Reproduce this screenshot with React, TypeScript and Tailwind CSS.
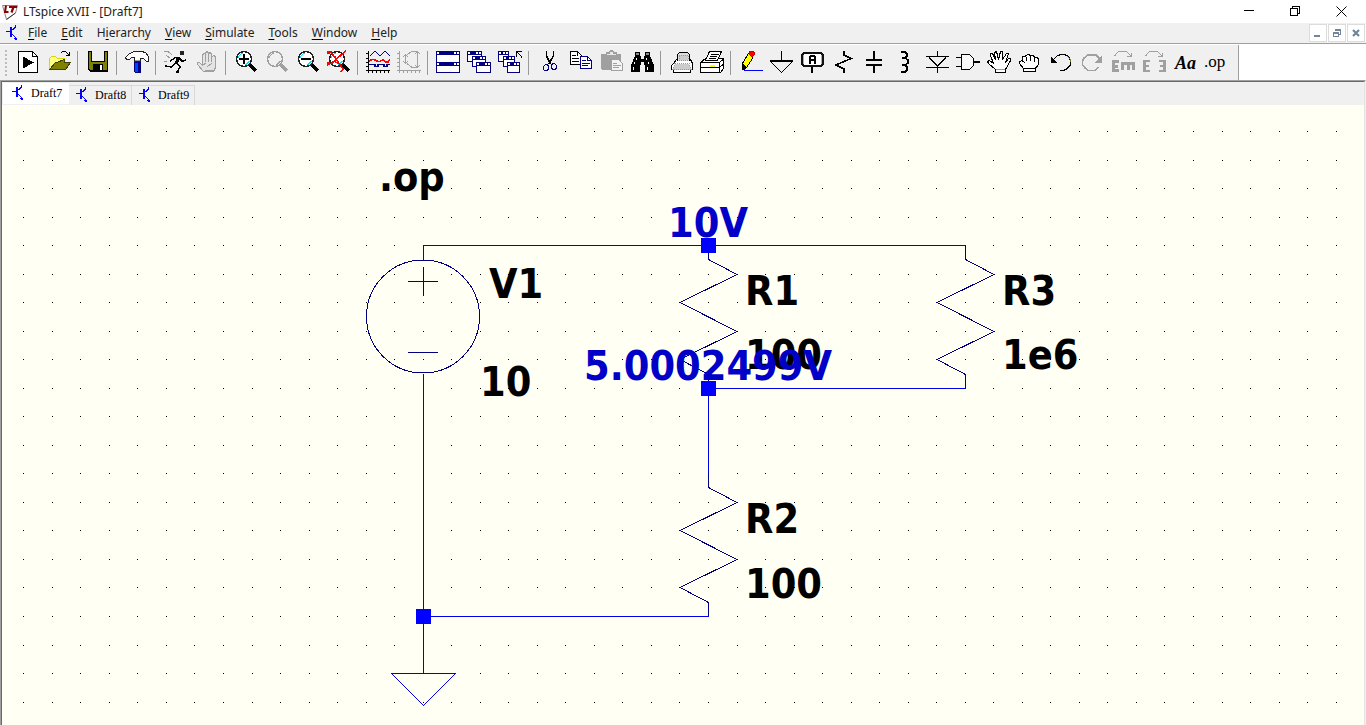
import type { ReactNode } from "react";

/* ---------- Toolbar icons, each drawn on a 25 x 25 pixel grid ---------- */

const NAVY = "#000080";
const GRAY = "#a0a0a0";

function Icon({ children }: { children: ReactNode }) {
  return (
    <svg
      width="25"
      height="25"
      viewBox="0 0 25 25"
      fill="none"
      stroke="#000"
      shapeRendering="crispEdges"
      aria-hidden="true"
      className="block"
    >
      {children}
    </svg>
  );
}

function Lens({ color = "#000", children }: { color?: string; children?: ReactNode }) {
  const gray = color !== "#000";
  return (
    <Icon>
      <path d="M16 15L22 21" stroke={color} strokeWidth="3.4" />
      <circle cx="10" cy="9" r="7.5" fill={gray ? "#f0f0f0" : "#fff"} stroke={gray ? color : "#222"} strokeWidth="1.5" />
      <path d="M4.5 8V6.5L7.5 3.5H9" stroke={gray ? color : "#00e5ff"} strokeWidth={gray ? 1 : 1.4} />
      <path d="M15.5 10.5V11L12 14.5H11" stroke={gray ? color : "#00e5ff"} strokeWidth={gray ? 1 : 1.4} />
      {children}
    </Icon>
  );
}

function MiniWindow({ x, y, w, h }: { x: number; y: number; w: number; h: number }) {
  return (
    <g stroke="none">
      <rect x={x} y={y} width={w} height={h} fill={NAVY} />
      <rect x={x + 1} y={y + 4} width={w - 2} height={h - 5} fill="#fff" />
      <rect x={x + 1} y={y + 1} width="2" height="2" fill="#fff" />
      <rect x={x + w - 6} y={y + 1} width="2" height="2" fill="#fff" />
      <rect x={x + w - 3} y={y + 1} width="2" height="2" fill="#fff" />
    </g>
  );
}

const icons: Record<string, ReactNode> = {
  play: (
    <Icon>
      <path d="M2.5 1.5H16.5L21.5 6.5V22.5H2.5Z" fill="#fff" />
      <path d="M16.5 1.5V6.5H21.5" />
      <path d="M7 6.5L18 12.5L7 18.5Z" fill="#000" stroke="none" />
    </Icon>
  ),
  open: (
    <Icon>
      <path d="M2.5 19.5V8.5L4.5 6.5H8.5L10.5 8.5H17.5V12.5" fill="#ffff80" stroke="#d8d800" />
      <path d="M2.5 19.5L8.5 12.5H23.5L18.5 19.5Z" fill="#808000" stroke="#404000" />
      <path d="M8 13L17.5 9.5V12.5" fill="#808000" stroke="#404000" />
      <path d="M13.5 3.5L15.5 1.5H18.5L22.5 5.5M22.5 2V5.5H18.5" />
    </Icon>
  ),
  save: (
    <Icon>
      <path d="M2 1H22V22H4L2 20Z" fill="#000" stroke="none" />
      <path d="M3 2H5V12H19V2H21V20H4L3 19Z" fill="#808000" stroke="none" />
      <path d="M6 1H18V11H6Z" fill="#f0f0f0" stroke="none" />
      <path d="M7 14H17V21H7Z" fill="#000" stroke="none" />
      <path d="M14 15H16V20H14Z" fill="#fff" stroke="none" />
    </Icon>
  ),
  hammer: (
    <Icon>
      <path d="M9 9H16V22L15 23H10L9 22Z" fill={NAVY} stroke="none" />
      <path d="M10 13H13V22H10Z" fill="#0040ff" stroke="none" />
      <path d="M1.5 9.5L.5 7.5L3.5 4.5L8.5 1.5H16.5L20.5 2.5L23.5 6.5V11.5H21.5L18.5 8.5H15.5V11.5H9.5V7.5H6.5L4.5 9.5Z" fill="#fff" stroke="#222" />
      <path d="M10 10.5H15" stroke="#999" />
    </Icon>
  ),
  run: (
    <Icon>
      <path d="M16 1H20V5H16Z" fill="#222" stroke="none" />
      <path d="M10 7H16V9L14 13H11L12 9Z" fill="#000" stroke="none" />
      <path d="M11 7.5L6 11.5M15 8L18.5 11.5L22 10M12 13L7 17L1 16M12 12L16 17L13 22H15" strokeWidth="1.5" />
      <path d="M0 1.5H4L8 5M2 5.5L6 8M0 11.5H3" stroke="#999" />
    </Icon>
  ),
  hand: (
    <Icon>
      <path d="M8.5 21.5L2.5 14.5V12.5H4.5L7.5 15.5V4.5L9.5 3.5L10.5 4.5V2.5L12.5 1.5L13.5 3.5L15.5 2.5L16.5 4.5V6.5L19.5 5.5L20.5 7.5V17.5L18.5 21.5Z" fill="#e4e4e4" stroke={GRAY} />
      <path d="M10.5 4V12M13.5 3V12M16.5 5V12M8 15L11 13M12 17L17 13M10 20.5H18" stroke={GRAY} />
    </Icon>
  ),
  zoomIn: (
    <Lens>
      <path d="M10 4V14M5 9H15" strokeWidth="2" />
    </Lens>
  ),
  pan: <Lens color={GRAY} />,
  zoomOut: (
    <Lens>
      <path d="M5 9H15" strokeWidth="2" />
    </Lens>
  ),
  zoomFit: (
    <Lens>
      <path d="M0 2H4L16 19L14 22M19 1L14 5L5 13L0 15" stroke="#f00" strokeWidth="1.6" />
      <path d="M8 6V12L13 14" stroke="#f00" />
      <path d="M0 1H3V4H0ZM0 12H3V15H0Z" fill="#f00" stroke="none" />
    </Lens>
  ),
  plot: (
    <Icon>
      <path d="M2.5 1V23M0 20.5H24M0 3.5H2M0 8.5H2M0 12.5H2M0 16.5H2M6.5 20V23M10.5 20V23M14.5 20V23M18.5 20V23M22.5 20V23" />
      <path d="M4 6L9 1L14 6L19 1L24 6" stroke={NAVY} />
      <path d="M3 11L6 9.5H8L12 11.5H14L17 9.5L20 12H22L24 9.5" stroke="#f00" strokeWidth="1.6" />
      <path d="M3 14.5H9V16.5H12V14.5H18V16.5H21V14.5H24" stroke={NAVY} strokeWidth="1.3" />
    </Icon>
  ),
  polar: (
    <Icon>
      <path d="M2.5 1V23M0 20.5H24M0 3.5H2M0 8.5H2M0 12.5H2M0 16.5H2M6.5 20V23M10.5 20V23M14.5 20V23M18.5 20V23M22.5 20V23" stroke={GRAY} />
      <path d="M8.5 5V14M6 7L8.5 4.5L11 7M6 11L8.5 13.5L11 11M10 4.5L15 1.5H20M10 13.5L15 17.5H20M20.5 1V18M18 4L20.5 1.5L23 4M18 15L20.5 17.5L23 15" stroke={GRAY} />
    </Icon>
  ),
  tile: (
    <Icon>
      <MiniWindow x={0} y={1} w={24} h={12} />
      <MiniWindow x={0} y={12} w={24} h={11} />
    </Icon>
  ),
  cascade: (
    <Icon>
      <MiniWindow x={0} y={1} w={15} h={11} />
      <MiniWindow x={5} y={6} w={14} h={11} />
      <MiniWindow x={9} y={12} w={15} h={11} />
    </Icon>
  ),
  closeAll: (
    <Icon>
      <MiniWindow x={0} y={1} w={11} h={11} />
      <MiniWindow x={5} y={6} w={12} h={11} />
      <MiniWindow x={9} y={12} w={13} h={11} />
      <path d="M18.5 7V1.5H24M19 2L23.5 6.5V8" />
    </Icon>
  ),
  cut: (
    <Icon>
      <path d="M9.5 1V6L13.5 14M16.5 1V6L11.5 14" strokeWidth="1.5" />
      <path d="M8.5 14.5H10.5L11.5 16.5V19.5L9.5 20.5H7.5L6.5 19.5V16.5ZM15.5 13.5H17.5L19.5 15.5V18.5L17.5 19.5H15.5L14.5 17.5V15.5Z" stroke={NAVY} strokeWidth="1.4" />
    </Icon>
  ),
  copy: (
    <Icon>
      <path d="M2.5 1.5H9.5L13.5 5.5V14.5H2.5Z" fill="#fff" />
      <path d="M9.5 1.5V5.5M4 5.5H8M4 8.5H11M4 11.5H11" />
      <path d="M12.5 6.5H19.5L23.5 10.5V18.5H12.5Z" fill="#fff" stroke={NAVY} />
      <path d="M19.5 6.5V10.5H23.5M14 10.5H18M14 13.5H22M14 15.5H20" stroke={NAVY} />
    </Icon>
  ),
  paste: (
    <Icon>
      <path d="M2 4H7V2H10L11 0H14L15 2H18V4H22V20H3L2 19Z" fill={GRAY} stroke="none" />
      <path d="M8 5H17V4H14V2H11V4H8Z" fill="#e8e8e8" stroke="none" />
      <path d="M12.5 9.5H19.5L23.5 13.5V20.5H12.5Z" fill="#f4f4f4" stroke={GRAY} />
      <path d="M14 13.5H18M14 15.5H22M14 17.5H20" stroke={GRAY} />
    </Icon>
  ),
  find: (
    <Icon>
      <path d="M5 2H10V6H11V9H14V6H15V2H20V6L24 15V22H15V15H14V12H11V15H10V22H1V15L5 6Z" fill="#000" stroke="none" />
      <path d="M6 3H9V5H6ZM16 3H19V5H16Z" fill="#888" stroke="none" />
      <path d="M6.5 8V10M4.5 12V14M3.5 17V20M16.5 8V10M18.5 12V14M17.5 17V20" stroke="#fff" />
    </Icon>
  ),
  print: (
    <Icon>
      <path d="M4.5 13.5L7.5 9.5H21.5L23.5 13.5V19.5H21.5V22.5H4.5V19.5H2.5V15.5Z" fill="#fff" />
      <path d="M8.5 10.5V4.5L10.5 2.5H18.5L20.5 4.5V10.5" fill="#ddd" />
      <path d="M6 13.5H20L22 19.5H4ZM10 5H19V10H10Z" fill="#ccc" stroke="#999" strokeDasharray="1 1" />
    </Icon>
  ),
  setup: (
    <Icon>
      <path d="M.5 12.5L5.5 8.5H23.5V18.5L20.5 22.5H.5Z" fill="#fff" />
      <path d="M.5 12.5H19.5V22M19.5 12.5L23.5 9M.5 17.5H19.5L23.5 14" />
      <path d="M5.5 10.5L9.5 1.5H21.5L17.5 10.5Z" fill="#fff" />
      <path d="M11 4.5H19M10 6.5H17M9 8.5H16" />
      <path d="M10 15.5H15" stroke="#ff0" strokeWidth="2" />
    </Icon>
  ),
  pencil: (
    <Icon>
      <path d="M3.5 13.5L9.5 3.5H13.5V8.5L7.5 17.5L3.5 19.5Z" fill="#ff0" />
      <path d="M10 4V2L12 1H14L15 2V5L13 7Z" fill="#f00" stroke="#c00" />
      <path d="M3 13L8 17L5 20H3Z" fill="#000" stroke="none" />
      <path d="M5 20.5H24" stroke="#00f" />
    </Icon>
  ),
  ground: (
    <Icon>
      <path d="M11.5 1V11M1 12L11.5 22.5L22 12" strokeWidth="1.4" />
      <path d="M0 11H23" strokeWidth="2" />
    </Icon>
  ),
  label: (
    <Icon>
      <path d="M3 3H20L22 5V14L20 16H3L1 14V5Z" fill="#fff" stroke="#111" strokeWidth="2" />
      <path d="M2.5 5V14M20.5 5V14" stroke="#b8b860" />
      <path d="M9 14V7L10 6H13L14 7V14M9 10H14" strokeWidth="2" />
      <path d="M11 17V23" strokeWidth="2" />
    </Icon>
  ),
  resistor: (
    <Icon>
      <path d="M12 1V5L19 8.5L4 15L12 19V23" strokeWidth="1.6" />
    </Icon>
  ),
  capacitor: (
    <Icon>
      <path d="M3 10H19M3 15H19M11 1V10M11 15V23" strokeWidth="2" />
    </Icon>
  ),
  inductor: (
    <Icon>
      <path d="M7 2H11L13 4V6L11 8H8M11 8L14 10V13L11 15H8M11 15L13 17V20L11 22H7" strokeWidth="1.6" />
    </Icon>
  ),
  diode: (
    <Icon>
      <path d="M12.5 1V6M12.5 17V23M1 6.5H24M1 17.5H24M4 7L12.5 16.5L21 7" strokeWidth="1.3" />
    </Icon>
  ),
  gate: (
    <Icon>
      <path d="M5.5 4.5H13.5L17.5 8.5V15.5L13.5 19.5H5.5Z" fill="#f8f8f8" strokeWidth="1.3" />
      <path d="M0 7.5H5M0 16.5H5M18 12H24" strokeWidth="1.4" />
    </Icon>
  ),
  move: (
    <Icon>
      <path d="M8.5 22.5V19.5L1.5 13.5L.5 11.5L2.5 10.5L6.5 13.5L3.5 5.5V3.5H5.5L8.5 9.5L7.5 2.5L9.5 1.5L11.5 9.5L13.5 1.5H15.5V9.5L19.5 3.5H21.5L18.5 12.5L21.5 8.5H23.5V10.5L18.5 19.5V22.5Z" fill="#fff" />
      <path d="M9 19.5H18" stroke="#999" />
    </Icon>
  ),
  drag: (
    <Icon>
      <path d="M5.5 21.5V18.5L1.5 13.5V11.5L4.5 10.5V6.5H7.5V5.5L10.5 4.5L12.5 5.5H15.5L16.5 7.5H19.5L20.5 9.5V14.5L17.5 18.5V21.5Z" fill="#fff" strokeWidth="1.2" />
      <path d="M8.5 7V11M12.5 6V11M16.5 8V12M4.5 11L7 13M6 18.5H17" />
    </Icon>
  ),
  undo: (
    <Icon>
      <path d="M4 10L8 6L12 4.5H16L20 7L21.5 11V15L18 19L14 20.5H11" strokeWidth="1.3" />
      <path d="M18 6L21 9V12" stroke="#808000" />
      <path d="M2 6V13H9L6 11L4 9Z" fill="#000" stroke="none" />
    </Icon>
  ),
  redo: (
    <Icon>
      <path d="M20 9L16 5H8L4 8L2.5 11V15L5 18L8 20.5H15L18 17" stroke={GRAY} strokeWidth="1.6" />
      <path d="M22 5V13H14L17 10L19 8Z" fill={GRAY} stroke="none" />
    </Icon>
  ),
  rotate: (
    <Icon>
      <path d="M3.5 6L7.5 1.5H15.5L20.5 6.5M20.5 3V6.5H16" stroke={GRAY} />
      <path d="M2.5 10V22M1 11.5H8M1 16H7M1 20.5H8M10 13.5H24M11.5 13V20M17 13V20M22.5 13V20" stroke={GRAY} strokeWidth="3" />
    </Icon>
  ),
  mirror: (
    <Icon>
      <path d="M3.5 6L7.5 1.5H15.5L20.5 6.5M20.5 3V6.5H16" stroke={GRAY} />
      <path d="M2.5 10V22M1 11H8M1 16H7M1 21H8M22.5 10V22M17 11H24M18 16H24M17 21H24" stroke={GRAY} strokeWidth="2.6" />
    </Icon>
  ),
};

type Tool = { id: string; name: string; off?: boolean };

const toolGroups: Tool[][] = [
  [{ id: "play", name: "New schematic" }, { id: "open", name: "Open" }],
  [{ id: "save", name: "Save" }],
  [{ id: "hammer", name: "Control panel" }],
  [{ id: "run", name: "Run" }, { id: "hand", name: "Halt", off: true }],
  [
    { id: "zoomIn", name: "Zoom in" },
    { id: "pan", name: "Pan", off: true },
    { id: "zoomOut", name: "Zoom out" },
    { id: "zoomFit", name: "Zoom to fit" },
  ],
  [{ id: "plot", name: "Pick visible traces" }, { id: "polar", name: "Autorange", off: true }],
  [
    { id: "tile", name: "Tile windows" },
    { id: "cascade", name: "Cascade windows" },
    { id: "closeAll", name: "Close windows" },
  ],
  [
    { id: "cut", name: "Cut" },
    { id: "copy", name: "Copy" },
    { id: "paste", name: "Paste", off: true },
    { id: "find", name: "Find" },
  ],
  [{ id: "print", name: "Print" }, { id: "setup", name: "Print setup" }],
  [
    { id: "pencil", name: "Wire" },
    { id: "ground", name: "Ground" },
    { id: "label", name: "Label net" },
    { id: "resistor", name: "Resistor" },
    { id: "capacitor", name: "Capacitor" },
    { id: "inductor", name: "Inductor" },
    { id: "diode", name: "Diode" },
    { id: "gate", name: "Component" },
    { id: "move", name: "Move" },
    { id: "drag", name: "Drag" },
    { id: "undo", name: "Undo" },
    { id: "redo", name: "Redo", off: true },
    { id: "rotate", name: "Rotate", off: true },
    { id: "mirror", name: "Mirror", off: true },
  ],
];

/* ---------- Small marks ---------- */

function Logo() {
  return (
    <svg width="18" height="18" viewBox="0 0 18 18" aria-hidden="true" className="block">
      <path d="M1.5 2.5H16.5L14.5 10L5.5 16.5Z" fill="#fff" stroke="#888" />
      <path d="M5.5 16.5L14.5 10" stroke="#333" />
      <path d="M5 2.5L4 9H7.5" fill="none" stroke="#8b0000" strokeWidth="2" />
      <path d="M8 4H16M12.5 4L10.5 9.5" fill="none" stroke="#8b0000" strokeWidth="2.2" />
    </svg>
  );
}

function Transistor() {
  return (
    <svg width="12" height="18" viewBox="0 0 12 18" fill="none" stroke="#00f" shapeRendering="crispEdges" aria-hidden="true" className="block">
      <path d="M0 7.5H5" />
      <path d="M5 3V13" strokeWidth="2" />
      <path d="M6 6L9.5 3.5V1M6 10L10 14V16" strokeWidth="1.2" />
      <path d="M10 12V15H7Z" fill="#00f" stroke="none" />
    </svg>
  );
}

/* ---------- Chrome ---------- */

const menus = [
  ["", "F", "ile"],
  ["", "E", "dit"],
  ["H", "i", "erarchy"],
  ["", "V", "iew"],
  ["", "S", "imulate"],
  ["", "T", "ools"],
  ["", "W", "indow"],
  ["", "H", "elp"],
];

function TitleBar() {
  return (
    <header className="flex h-[23px] items-center bg-white pr-0.5">
      <div className="pl-px">
        <Logo />
      </div>
      <h1 className="ml-1 flex-1 text-[12px] leading-4 text-[#222]">LTspice XVII - [Draft7]</h1>
      <button aria-label="Minimize" className="flex h-5 w-[46px] items-center justify-center">
        <svg width="11" height="11" viewBox="0 0 11 11" stroke="#000" shapeRendering="crispEdges">
          <path d="M0 4.5H10" />
        </svg>
      </button>
      <button aria-label="Restore" className="flex h-5 w-[46px] items-center justify-center">
        <svg width="11" height="11" viewBox="0 0 11 11" fill="none" stroke="#000" shapeRendering="crispEdges">
          <path d="M.5 2.5H7.5V9.5H.5ZM2.5 2V.5H9.5V7.5H8" />
        </svg>
      </button>
      <button aria-label="Close" className="flex h-5 w-[46px] items-center justify-center">
        <svg width="11" height="11" viewBox="0 0 11 11" stroke="#000">
          <path d="M.5 .5L10.5 10.5M10.5 .5L.5 10.5" />
        </svg>
      </button>
    </header>
  );
}

function MenuBar() {
  return (
    <div className="flex h-[21px] items-center border-b border-[#a0a0a0] bg-[#f0f0f0] pl-1.5">
      <Transistor />
      <nav className="ml-[3px] flex flex-1">
        {menus.map(([before, key, after]) => (
          <button key={before + key + after} className="px-[7px] text-[12px] leading-4 text-[#222]">
            {before}
            <span className="underline decoration-black decoration-1 underline-offset-2">{key}</span>
            {after}
          </button>
        ))}
      </nav>
      <div className="flex gap-px bg-white pr-px">
        <button aria-label="Minimize document" className="flex size-[18px] items-center justify-center border border-[#dcdcdc] bg-white">
          <svg width="10" height="10" viewBox="0 0 10 10" fill="#73859a" shapeRendering="crispEdges">
            <path d="M1 7H7V9H1Z" />
          </svg>
        </button>
        <button aria-label="Restore document" className="flex size-[18px] items-center justify-center border border-[#dcdcdc] bg-white">
          <svg width="10" height="10" viewBox="0 0 10 10" fill="none" stroke="#73859a" shapeRendering="crispEdges">
            <path d="M1.5 4.5H6.5V8.5H1.5ZM1 5.5H7M3.5 3V1.5H8.5V6.5H7M3 2.5H9" />
          </svg>
        </button>
        <button aria-label="Close document" className="flex size-[18px] items-center justify-center border border-[#dcdcdc] bg-white">
          <svg width="10" height="10" viewBox="0 0 10 10" stroke="#73859a" strokeWidth="2.2">
            <path d="M2 2L8 8M8 2L2 8" />
          </svg>
        </button>
      </div>
    </div>
  );
}

function Toolbar() {
  return (
    <div className="bg-white pt-px">
      <div role="toolbar" aria-label="Schematic tools" className="flex h-[35px] w-fit items-center border-r border-[#a0a0a0] bg-[#f0f0f0] pr-1.5">
        <span className="ml-[5px] mr-1.5 flex flex-col gap-0.5" aria-hidden="true">
          {[0, 1, 2, 3, 4, 5, 6].map((n) => (
            <span key={n} className="size-0.5 bg-[#bcbcbc]" />
          ))}
        </span>
        {toolGroups.map((group, index) => (
          <div key={group[0].id} className="flex items-center">
            {index > 0 && <span className="ml-0.5 mr-[5px] h-6 w-px bg-[#999]" />}
            {group.map((tool) => (
              <button key={tool.id} aria-label={tool.name} disabled={tool.off} className="w-[31px] px-[3px]">
                {icons[tool.id]}
              </button>
            ))}
          </div>
        ))}
        <button aria-label="Text" className="w-[31px] font-['Liberation_Serif',serif] text-[18px] font-bold italic leading-6">
          Aa
        </button>
        <button aria-label="SPICE directive" className="w-[31px] pb-0.5 pr-1 font-['Liberation_Serif',serif] text-[17px] leading-5">
          .op
        </button>
      </div>
    </div>
  );
}

function Tabs() {
  return (
    <div role="tablist" className="flex h-[23px] items-start bg-[#f0f0f0] pl-px pt-px">
      {["Draft7", "Draft8", "Draft9"].map((name, index) => (
        <button
          key={name}
          role="tab"
          aria-selected={index === 0}
          className={
            index === 0
              ? "flex h-[21px] w-[66px] items-center gap-[7px] bg-white pb-0.5 pl-[9px]"
              : "flex h-[20px] w-[63px] items-center gap-[7px] self-end border-r border-t border-[#d9d9d9] pb-0.5 pl-[7px]"
          }
        >
          <Transistor />
          <span className="font-['Liberation_Serif',serif] text-[12px] leading-4">{name}</span>
        </button>
      ))}
    </div>
  );
}

/* ---------- Schematic ---------- */

const gridDots = Array.from({ length: 21 }, (_, row) =>
  Array.from({ length: 47 }, (_, col) => {
    const x = Math.floor(23.77 + 28.53 * col);
    const y = Math.floor(131.5 + 28.53 * row);
    return `M${x} ${y}h1v1h-1z`;
  }).join(""),
).join("");

function Resistor({ x, y }: { x: number; y: number }) {
  return (
    <path
      transform={`translate(${x} ${y})`}
      d="M.5 .5V14.5L29 29.5L-28 57.5L29 86.5L-28 114.5L.5 129.5V143"
      stroke={NAVY}
    />
  );
}

function Schematic() {
  return (
    <svg className="block min-h-[600px] w-full flex-1 bg-[#fffff3]" role="img" aria-label="Schematic">
      <g transform="translate(-2 -105)" fill="none" shapeRendering="crispEdges">
        <path d={gridDots} fill="#000" />
        <path d="M423.5 260V245.5H965.5V260M708.5 388.5H965.5V374M708.5 388V488M423.5 374V673M423 616.5H708.5V602" stroke="#0000e6" />
        <path d="M391.5 673.5H455.5L423.5 705.5Z" stroke="#0000e6" />
        <circle cx="423" cy="316.5" r="56.5" stroke={NAVY} />
        <path d="M408 281.5H438M423.5 267V296M408 352.5H438" stroke={NAVY} />
        <Resistor x={708} y={245} />
        <Resistor x={965} y={245} />
        <Resistor x={708} y={473} />
      </g>
      <g
        transform="translate(-2 -105)"
        className="font-['DejaVu_Sans_Condensed','DejaVu_Sans',sans-serif] text-[41px] font-bold"
      >
        <text x="379" y="191">.op</text>
        <text x="489" y="298">V1</text>
        <text x="480" y="396">10</text>
        <text x="745" y="305">R1</text>
        <text x="745" y="369">100</text>
        <text x="745" y="533">R2</text>
        <text x="745" y="598">100</text>
        <text x="1002" y="305">R3</text>
        <text x="1002" y="369">1e6</text>
        <g fill="#0000c8" textAnchor="middle">
          <text x="708" y="237">10V</text>
          <text x="708" y="380">5.0002499V</text>
        </g>
        <path d="M701 238h15v15h-15zM701 381h15v15h-15zM416 609h15v15h-15z" fill="#00f" />
      </g>
    </svg>
  );
}

export default function App() {
  return (
    <div className="flex min-h-screen flex-col bg-[#f0f0f0] font-['Noto_Sans',sans-serif] text-black">
      <TitleBar />
      <MenuBar />
      <Toolbar />
      <main className="flex flex-1 flex-col border-l border-r border-t border-l-[#a0a0a0] border-r-[#f0f0f0] border-t-[#a0a0a0]">
        <div className="flex flex-1 flex-col border-l border-r border-t border-l-[#696969] border-r-[#e3e3e3] border-t-[#696969]">
          <Tabs />
          <Schematic />
        </div>
      </main>
    </div>
  );
}
